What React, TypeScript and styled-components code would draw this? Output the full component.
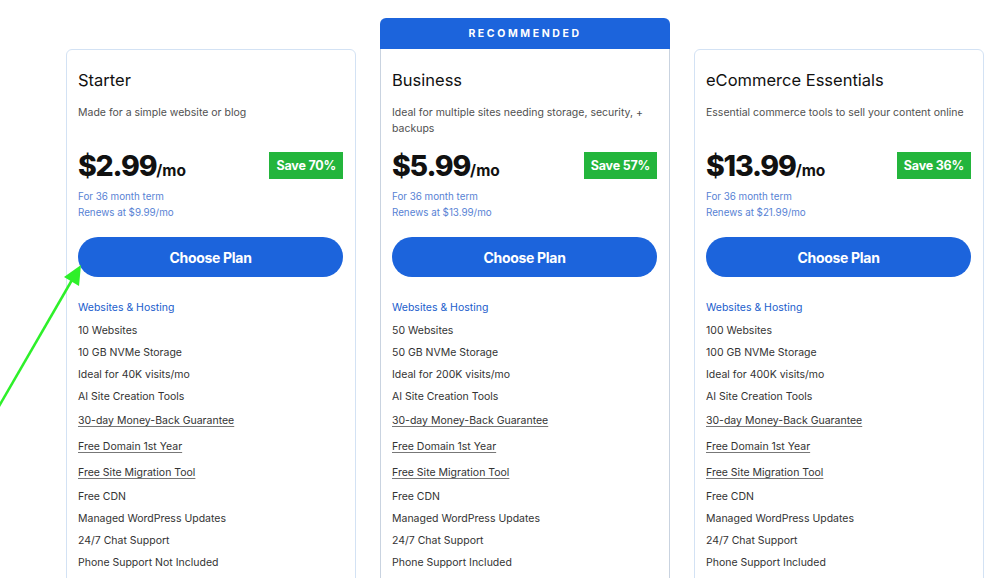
import styled, { createGlobalStyle } from "styled-components";

const GlobalStyle = createGlobalStyle`
  html, body {
    margin: 0;
    padding: 0;
    background: #ffffff;
    font-family: Inter, "Open Sans", "Liberation Sans", sans-serif;
    overflow: hidden;
  }
`;

const Page = styled.div`
  position: relative;
  width: 1000px;
  height: 578px;
  overflow: hidden;
  background: #fff;
`;

const Row = styled.div`
  display: flex;
  gap: 24px;
  padding: 18px 0 0 66px;
  align-items: flex-start;
`;

const Column = styled.div<{ $featured?: boolean }>`
  width: 290px;
  display: flex;
  flex-direction: column;
  margin-top: ${({ $featured }) => ($featured ? "0" : "31px")};
`;

const Ribbon = styled.div`
  height: 31px;
  padding-bottom: 1px;
  box-sizing: border-box;
  background: #1c64dc;
  border-radius: 6px 6px 0 0;
  color: #fff;
  font-size: 10.5px;
  font-weight: 700;
  letter-spacing: 2.6px;
  display: flex;
  align-items: center;
  justify-content: center;
`;

const Card = styled.div<{ $featured?: boolean }>`
  border: 1px solid ${({ $featured }) => ($featured ? "#c9d3e0" : "#d3e2f4")};
  border-top: ${({ $featured }) => ($featured ? "none" : "1px solid #d3e2f4")};
  border-radius: ${({ $featured }) => ($featured ? "0" : "6px 6px 0 0")};
  padding: ${({ $featured }) => ($featured ? "21px" : "20px")} 12px 40px 11px;
  height: 600px;
  box-sizing: border-box;
`;

const Title = styled.div`
  font-size: 16.5px;
  line-height: 20px;
  color: #111;
  font-weight: 400;
`;

const Desc = styled.div`
  margin-top: 15px;
  font-size: 10.5px;
  line-height: 16px;
  color: #505050;
  min-height: 32px;
`;

const PriceRow = styled.div`
  margin-top: 12px;
  height: 32px;
  display: flex;
  align-items: center;
  justify-content: space-between;
`;

const Price = styled.div`
  font-size: 28.5px;
  font-weight: 800;
  color: #111;
  letter-spacing: -1.2px;
  span {
    font-size: 15.5px;
    font-weight: 700;
    letter-spacing: 0;
  }
`;

const Badge = styled.div`
  background: #23b53c;
  color: #fff;
  font-size: 12.5px;
  font-weight: 700;
  letter-spacing: -0.2px;
  height: 27px;
  padding: 0 7px;
  display: flex;
  align-items: center;
`;

const Terms = styled.div`
  margin-top: 8px;
  font-size: 9.8px;
  line-height: 16px;
  color: #5782d4;
`;

const Button = styled.button`
  margin-top: 16px;
  width: 100%;
  height: 40px;
  border: none;
  border-radius: 20px;
  background: #1c64dc;
  color: #fff;
  font-family: inherit;
  font-size: 14px;
  font-weight: 700;
  letter-spacing: -0.3px;
  cursor: pointer;
`;

const Section = styled.div`
  margin-top: 23px;
  margin-bottom: 4px;
  font-size: 10.5px;
  line-height: 16px;
  color: #1a5dcc;
`;

const Feature = styled.div<{ $link?: boolean }>`
  font-size: 10.5px;
  line-height: ${({ $link }) => ($link ? "26px" : "22px")};
  color: #333;
  text-decoration: ${({ $link }) => ($link ? "underline" : "none")};
  text-underline-offset: 2px;
  text-decoration-color: #777;
`;

const Arrow = styled.svg`
  position: absolute;
  left: 0;
  top: 0;
  pointer-events: none;
`;

type Plan = {
  name: string;
  desc: string;
  price: string;
  save: string;
  renew: string;
  featured?: boolean;
  features: string[];
};

const plans: Plan[] = [
  {
    name: "Starter",
    desc: "Made for a simple website or blog",
    price: "$2.99",
    save: "Save 70%",
    renew: "Renews at $9.99/mo",
    features: ["10 Websites", "10 GB NVMe Storage", "Ideal for 40K visits/mo", "AI Site Creation Tools", "Phone Support Not Included"],
  },
  {
    name: "Business",
    desc: "Ideal for multiple sites needing storage, security, + backups",
    price: "$5.99",
    save: "Save 57%",
    renew: "Renews at $13.99/mo",
    featured: true,
    features: ["50 Websites", "50 GB NVMe Storage", "Ideal for 200K visits/mo", "AI Site Creation Tools", "Phone Support Included"],
  },
  {
    name: "eCommerce Essentials",
    desc: "Essential commerce tools to sell your content online",
    price: "$13.99",
    save: "Save 36%",
    renew: "Renews at $21.99/mo",
    features: ["100 Websites", "100 GB NVMe Storage", "Ideal for 400K visits/mo", "AI Site Creation Tools", "Phone Support Included"],
  },
];

const linked = ["30-day Money-Back Guarantee", "Free Domain 1st Year", "Free Site Migration Tool"];
const common = ["Free CDN", "Managed WordPress Updates", "24/7 Chat Support"];

export default function App() {
  return (
    <Page>
      <GlobalStyle />
      <Row>
        {plans.map((p) => (
          <Column key={p.name} $featured={p.featured}>
            {p.featured && <Ribbon>RECOMMENDED</Ribbon>}
            <Card $featured={p.featured}>
              <Title>{p.name}</Title>
              <Desc>{p.desc}</Desc>
              <PriceRow>
                <Price>
                  {p.price}
                  <span>/mo</span>
                </Price>
                <Badge>{p.save}</Badge>
              </PriceRow>
              <Terms>
                For 36 month term
                <br />
                {p.renew}
              </Terms>
              <Button>Choose Plan</Button>
              <Section>Websites &amp; Hosting</Section>
              {p.features.slice(0, 4).map((f) => (
                <Feature key={f}>{f}</Feature>
              ))}
              {linked.map((f) => (
                <Feature key={f} $link>
                  {f}
                </Feature>
              ))}
              {common.map((f) => (
                <Feature key={f}>{f}</Feature>
              ))}
              <Feature>{p.features[4]}</Feature>
            </Card>
          </Column>
        ))}
      </Row>
      <Arrow width="100" height="420" viewBox="0 0 100 420">
        <line x1="-2" y1="408" x2="72" y2="280" stroke="#2ef02a" strokeWidth="2.5" />
        <polygon points="81,265 79,286 64,277" fill="#2ef02a" />
      </Arrow>
    </Page>
  );
}
